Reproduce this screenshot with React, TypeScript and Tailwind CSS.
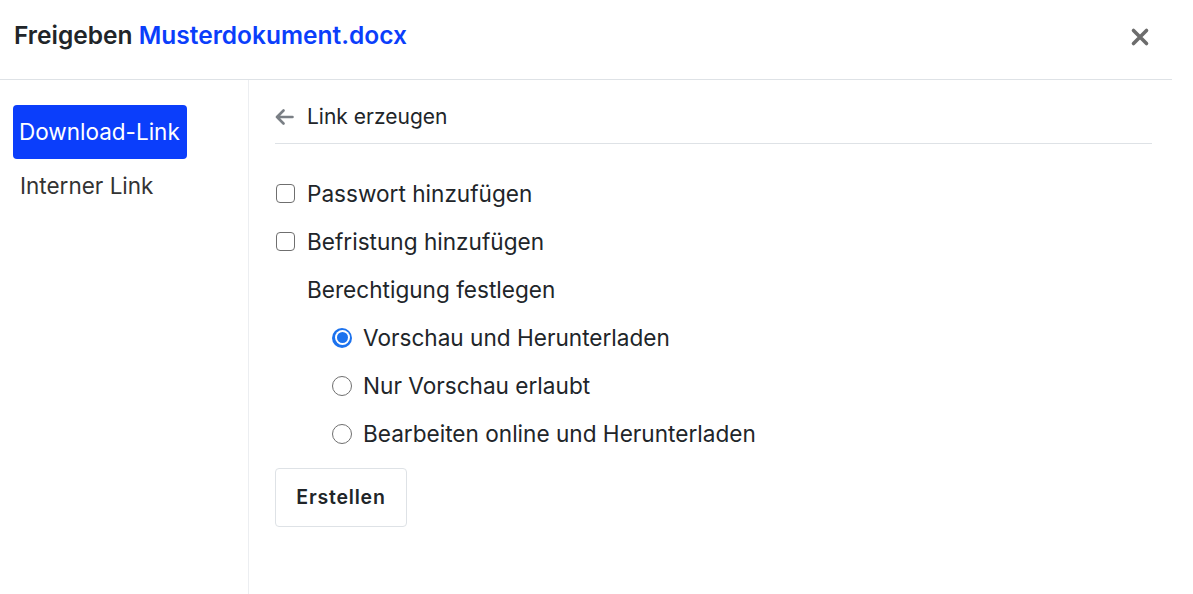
import { useState } from 'react';

const options = [
    'Vorschau und Herunterladen',
    'Nur Vorschau erlaubt',
    'Bearbeiten online und Herunterladen',
];

const ArrowLeft = () => (
    <svg width="19" height="16" viewBox="0 0 19 16" fill="none" stroke="#7a7f85" strokeWidth="2.6" strokeLinecap="round" strokeLinejoin="round">
        <path d="M17.5 8H2M8.5 1.5L2 8l6.5 6.5" />
    </svg>
);

const CloseIcon = () => (
    <svg width="20" height="20" viewBox="0 0 20 20" stroke="#6c6c6c" strokeWidth="3.6" strokeLinecap="round">
        <path d="M3.5 3.5l13 13M16.5 3.5l-13 13" />
    </svg>
);

const Checkbox = () => (
    <span className="w-[19px] h-[19px] rounded-[4px] border-[1.5px] border-[#6f6f6f] bg-white shrink-0" />
);

const Radio = ({ checked }: { checked: boolean }) =>
    checked ? (
        <span className="w-[20px] h-[20px] rounded-full bg-[#1c72ee] flex items-center justify-center shrink-0">
            <span className="w-[15px] h-[15px] rounded-full bg-white flex items-center justify-center">
                <span className="w-[11px] h-[11px] rounded-full bg-[#1c72ee]" />
            </span>
        </span>
    ) : (
        <span className="w-[20px] h-[20px] rounded-full border-[1.5px] border-[#6f6f6f] bg-white shrink-0" />
    );

export default function App() {
    const [selected, setSelected] = useState(0);

    return (
        <div className="w-[1172px] h-[594px] bg-white text-[#212529] flex flex-col" style={{ fontFamily: 'Inter, "Noto Sans", sans-serif' }}>
            <div className="h-[80px] shrink-0 border-b border-[#dee2e6] flex items-center justify-between pl-[14px] pr-[22px]">
                <h1 className="text-[24.5px] font-semibold leading-none -mt-[8px]">
                    Freigeben <span className="text-[#0b3efb]">Musterdokument.docx</span>
                </h1>
                <button className="-mt-[6px]">
                    <CloseIcon />
                </button>
            </div>
            <div className="flex flex-1">
                <div className="w-[249px] shrink-0 border-r border-[#eceef1] pt-[25px] pl-[13px]">
                    <div className="w-[174px] h-[54px] rounded-[4px] bg-[#0b3efb] text-white text-[22.5px] flex items-center pl-[6px]">
                        Download-Link
                    </div>
                    <div className="text-[22.5px] text-[#333] pl-[7px] mt-[12px] leading-[30px]">Interner Link</div>
                </div>
                <div className="flex-1 pl-[26px] pr-[20px] pt-[23px]">
                    <div className="flex items-center gap-[13px] pb-[12px] border-b border-[#dee2e6]">
                        <ArrowLeft />
                        <span className="text-[21px] leading-[28px]">Link erzeugen</span>
                    </div>
                    <div className="flex flex-col gap-[15px] mt-[33px] text-[22.6px] leading-[33px]">
                        <label className="flex items-center gap-[12px] pl-[1px]">
                            <Checkbox />
                            <span>Passwort hinzufügen</span>
                        </label>
                        <label className="flex items-center gap-[12px] pl-[1px]">
                            <Checkbox />
                            <span>Befristung hinzufügen</span>
                        </label>
                        <div className="pl-[32px]">Berechtigung festlegen</div>
                        {options.map((o, i) => (
                            <label key={o} className="flex items-center gap-[11px] pl-[57px]" onClick={() => setSelected(i)}>
                                <Radio checked={selected === i} />
                                <span>{o}</span>
                            </label>
                        ))}
                    </div>
                    <button className="mt-[18px] w-[132px] h-[59px] rounded-[4px] border border-[#dee2e6] text-[19.5px] font-semibold tracking-[0.8px] text-[#212529]">
                        Erstellen
                    </button>
                </div>
            </div>
        </div>
    );
}
